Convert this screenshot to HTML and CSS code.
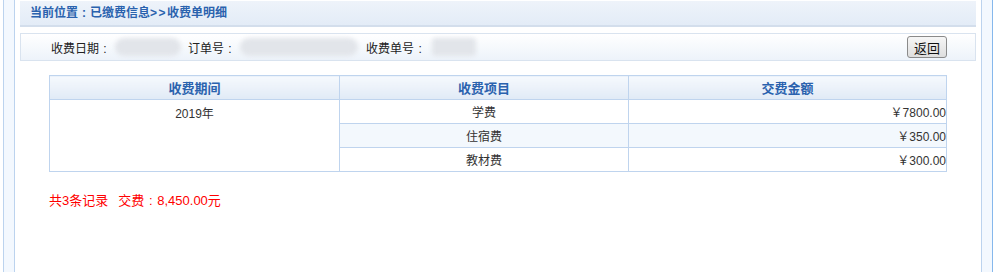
FILE: index.html
```html
<!DOCTYPE html>
<html lang="zh-CN">
<head>
    <meta charset="UTF-8">
    <title>收费单明细</title>
    <link rel="stylesheet" href="styles.css">
</head>
<body>
    <div class="frame">
        <div class="side side-left"></div>

        <div class="main">
            <div class="place-bar">当前位置<span class="colon">:</span>已缴费信息<span class="arrows">&gt;&gt;</span>收费单明细</div>

            <div class="info-bar">
                <span class="label">收费日期<span class="colon">:</span></span>
                <span class="mask mask-date"></span>
                <span class="label">订单号<span class="colon">:</span></span>
                <span class="mask mask-order"></span>
                <span class="label">收费单号<span class="colon">:</span></span>
                <span class="mask mask-bill"></span>
                <button class="btn-back">返回</button>
            </div>

            <table class="detail">
                <thead>
                    <tr>
                        <th>收费期间</th>
                        <th>收费项目</th>
                        <th>交费金额</th>
                    </tr>
                </thead>
                <tbody>
                    <tr>
                        <td class="period" rowspan="3">2019年</td>
                        <td>学费</td>
                        <td class="money">￥7800.00</td>
                    </tr>
                    <tr class="alt">
                        <td>住宿费</td>
                        <td class="money">￥350.00</td>
                    </tr>
                    <tr>
                        <td>教材费</td>
                        <td class="money">￥300.00</td>
                    </tr>
                </tbody>
            </table>

            <!-- totals -->
            <div class="summary">共3条记录<span class="total">交费<span class="colon">:</span>8,450.00元</span></div>
        </div>

        <div class="side side-right"></div>
    </div>
</body>
</html>
```

FILE: styles.css
```css
body {
    margin: 0;
    padding: 0;
    background: #fff;
    font-family: "Liberation Sans", "Noto Sans CJK SC", sans-serif;
    font-size: 12px;
    color: #333;
}

/* the original font draws the colon centred in a full-width cell */
.colon {
    display: inline-block;
    width: 1em;
    text-align: center;
}

.frame {
    display: flex;
    height: 272px;
}

.side {
    width: 10px;
    background: #f3f8fe;
    border-left: 1px solid #bcd3ee;
    border-right: 1px solid #bcd3ee;
}

.side-left {
    margin-left: 3px;
}

.side-right {
    border-right: 1px solid #86b8ec;
    margin-right: 1px;
}

.main {
    flex: 1;
    padding: 1px 5px 0 5px;
}

.place-bar {
    height: 24px;
    line-height: 24px;
    padding-left: 10px;
    background: linear-gradient(#eef3fa, #e3ecf7);
    border-bottom: 2px solid #d3deec;
    color: #2a62ae;
    font-weight: bold;
}

.arrows {
    letter-spacing: 1.5px;
}

.info-bar {
    display: flex;
    align-items: center;
    height: 26px;
    margin-top: 6px;
    padding-left: 30px;
    padding-right: 28px;
    border: 1px solid #d9e3ef;
    background: linear-gradient(#ffffff, #edf3fa);
    color: #222;
}

.mask {
    display: inline-block;
    height: 18px;
    background: #e2e5ea;
    border-radius: 9px;
    filter: blur(2px);
}

.mask-date {
    width: 66px;
    margin: 0 7px 0 4px;
}

.mask-order {
    width: 118px;
    margin: 0 8px 0 4px;
}

.mask-bill {
    width: 44px;
    margin-left: 6px;
    border-radius: 4px;
}

.btn-back {
    margin-left: auto;
    width: 40px;
    height: 22px;
    padding: 0;
    font-family: "Noto Sans CJK SC", sans-serif;
    font-size: 13px;
    color: #111;
    background: linear-gradient(#f6f6f6, #dedede);
    border: 1px solid #8a8a8a;
    border-radius: 3px;
}

.detail {
    width: 898px;
    margin: 14px 0 0 29px;
    border-collapse: collapse;
}

.detail th, .detail td {
    border: 1px solid #bfd4ee;
    height: 23px;
    padding: 0;
    text-align: center;
}

.detail th {
    font-size: 13px;
    color: #2a62ae;
    background: linear-gradient(#f6f9fd, #e0eaf6);
}

.detail th:nth-child(1) { width: 289px; }
.detail th:nth-child(2) { width: 288px; }

.detail td.period {
    vertical-align: top;
    padding-top: 4px;
    background: #fff;
}

.detail td.money {
    text-align: right;
    padding-right: 0;
}

.detail tr.alt td {
    background: #f3f8fd;
}

.summary {
    margin: 18px 0 0 29px;
    color: #ff0000;
    font-size: 13px;
}

.summary .total {
    margin-left: 10px;
}
```
